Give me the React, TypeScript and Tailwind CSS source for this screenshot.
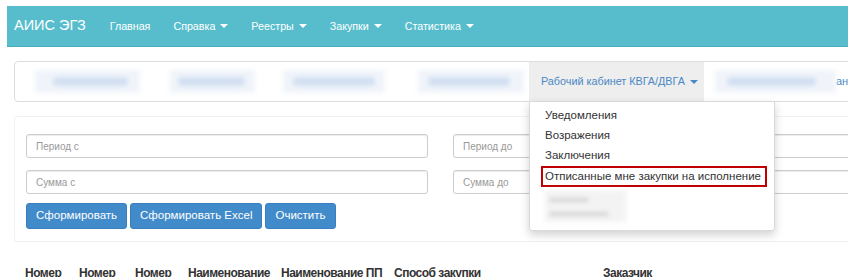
import type { ReactNode } from 'react'

const caret = (color: string, ml = 'ml-[6px]') => (
  <span className={`${ml} inline-block h-0 w-0 border-x-[4px] border-t-[4px] border-x-transparent align-middle ${color}`} />
)

function Blob({ w, bar }: { w: number; bar: [number, number] }) {
  return (
    <div className="relative h-[23px] shrink-0 bg-[#f0f4fa] blur-[2px]" style={{ width: w }}>
      <div className="absolute top-[7px] h-[9px] rounded bg-[#d3e0f2]" style={{ left: bar[0], right: bar[1] }} />
    </div>
  )
}

function NavLink({ children, dd }: { children: ReactNode; dd?: boolean }) {
  return (
    <span className="flex items-center whitespace-nowrap text-[10.7px] text-white">
      {children}
      {dd && caret('border-t-white', 'ml-[5px]')}
    </span>
  )
}

function Field({ ph }: { ph: string }) {
  return (
    <div className="flex h-[24px] w-[402px] shrink-0 items-center rounded-[3px] border border-[#cccccc] bg-white pl-[9px] text-[10px] text-[#999999] shadow-[inset_0_1px_1px_rgba(0,0,0,0.075)]">
      {ph}
    </div>
  )
}

function Btn({ children }: { children: ReactNode }) {
  return (
    <button className="h-[26px] whitespace-nowrap rounded-[3px] border border-[#3a7fc0] bg-[#428bca] px-[9px] text-[11.5px] text-white">
      {children}
    </button>
  )
}

export default function App() {
  return (
    <div className="relative h-[277px] w-[862px] overflow-hidden bg-white font-['Liberation_Sans',Arial,sans-serif] text-[#333333]">
      <div className="ml-[7px] h-[277px] w-[841px] overflow-hidden pt-[6px]">
        {/* top navbar */}
        <div className="flex h-[41px] items-center border-b border-[#4aaebe] bg-[#57bdcc] pl-[7px]">
          <span className="mr-[24px] whitespace-nowrap text-[14.5px] text-white">АИИС ЭГЗ</span>
          <div className="flex items-center gap-[23px]">
            <NavLink>Главная</NavLink>
            <NavLink dd>Справка</NavLink>
            <NavLink dd>Реестры</NavLink>
            <NavLink dd>Закупки</NavLink>
            <NavLink dd>Статистика</NavLink>
          </div>
        </div>

        {/* second nav */}
        <div className="ml-[7px] mt-[14px] flex h-[41px] w-[850px] items-center rounded-[4px] border border-[#dddddd] bg-white pl-[20px]">
          <Blob w={105} bar={[18, 12]} />
          <div className="w-[30px] shrink-0" />
          <Blob w={85} bar={[8, 10]} />
          <div className="w-[28px] shrink-0" />
          <Blob w={102} bar={[10, 10]} />
          <div className="w-[33px] shrink-0" />
          <Blob w={106} bar={[10, 14]} />
          <div className="relative ml-[5px] flex h-[39px] w-[175px] shrink-0 items-center whitespace-nowrap bg-[#eeeeee] pl-[12px] text-[10.8px] text-[#4a88c6]">
            Рабочий кабинет КВГА/ДВГА
            {caret('border-t-[#4a88c6]', 'ml-[5px]')}
            {/* dropdown */}
            <div className="absolute left-0 top-[39px] z-10 h-[130px] w-[246px] rounded-b-[3px] border border-[#d9d9d9] bg-white pt-[4px] text-[11.5px] text-[#333333] shadow-[0_4px_10px_rgba(0,0,0,0.18)]">
              <div className="flex h-[20px] items-center pl-[15px]">Уведомления</div>
              <div className="flex h-[20px] items-center pl-[15px]">Возражения</div>
              <div className="flex h-[20px] items-center pl-[15px]">Заключения</div>
              <div className="ml-[11px] mr-[7px] flex h-[21px] items-center border-2 border-[#c00000] pl-[2px]">
                Отписанные мне закупки на исполнение
              </div>
              <div className="ml-[15px] mt-[3px] h-[32px] w-[81px] bg-[#f3f3f3] blur-[2px]">
                <div className="ml-[4px] pt-[8px]">
                  <div className="h-[4px] w-[40px] rounded bg-[#d6d6d6]" />
                  <div className="mt-[10px] h-[4px] w-[60px] rounded bg-[#d6d6d6]" />
                </div>
              </div>
            </div>
          </div>
          <div className="w-[11px] shrink-0" />
          <Blob w={121} bar={[12, 20]} />
          <span className="whitespace-nowrap text-[11px] text-[#4a88c6]">ани</span>
        </div>

        {/* filter panel */}
        <div className="ml-[7px] mt-[14px] w-[850px] rounded-[3px] border border-[#f1f1f1] pb-[12px] pl-[11px] pt-[17px]">
          <div className="flex gap-[25px]">
            <Field ph="Период с" />
            <Field ph="Период до" />
          </div>
          <div className="mt-[12px] flex gap-[25px]">
            <Field ph="Сумма с" />
            <Field ph="Сумма до" />
          </div>
          <div className="mt-[9px] flex gap-[3px]">
            <Btn>Сформировать</Btn>
            <Btn>Сформировать Excel</Btn>
            <Btn>Очистить</Btn>
          </div>
        </div>

        {/* table header */}
        <div className="mt-[22px] flex whitespace-nowrap pl-[18px] text-[12px] font-bold tracking-[-0.5px] text-[#333333]">
          <span className="w-[54px] shrink-0">Номер</span>
          <span className="w-[56px] shrink-0">Номер</span>
          <span className="w-[53px] shrink-0">Номер</span>
          <span className="w-[93px] shrink-0">Наименование</span>
          <span className="w-[113px] shrink-0">Наименование ПП</span>
          <span className="w-[209px] shrink-0">Способ закупки</span>
          <span>Заказчик</span>
        </div>
      </div>
    </div>
  )
}
